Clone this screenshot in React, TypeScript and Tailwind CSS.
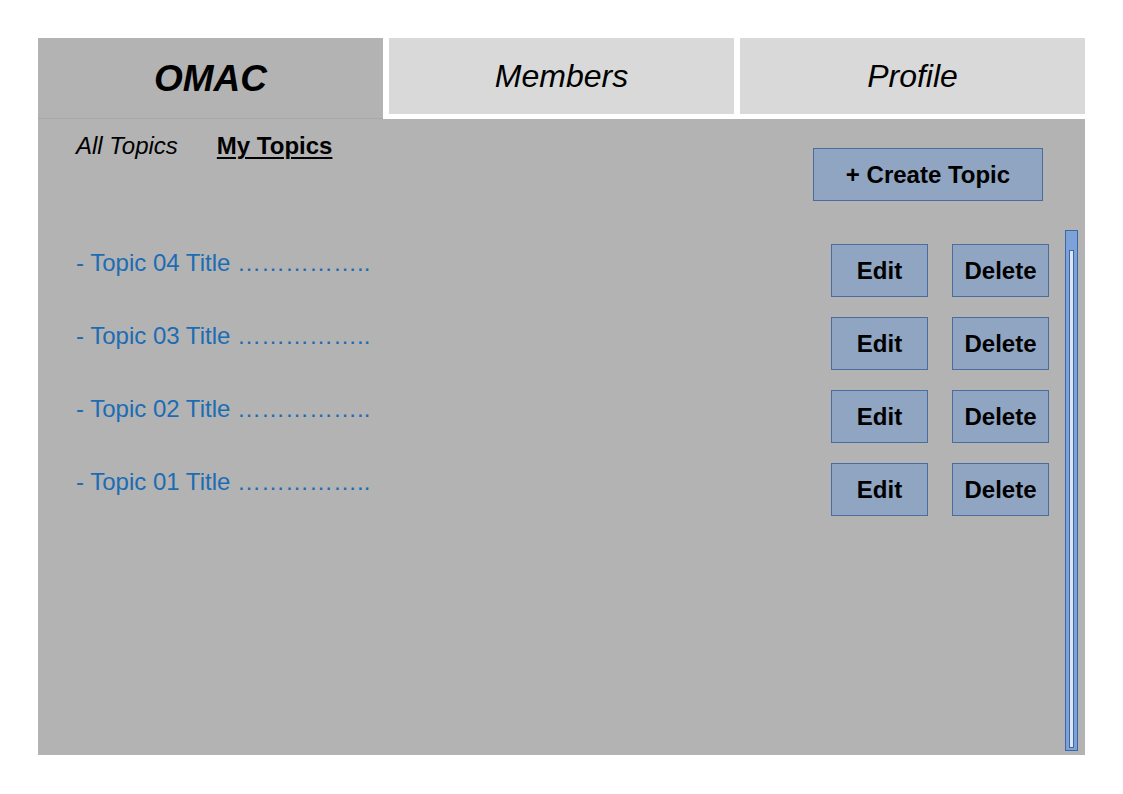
import React from "react";

const topics = ["04", "03", "02", "01"];

export default function App() {
  return (
    <div className="w-[1123px] h-[794px] bg-white pl-[38px] pt-[38px] font-['Liberation_Sans',Arial,sans-serif]">
      <div className="w-[1047px]">
        {/* Header tabs */}
        <div className="flex h-[81px] items-start">
          <div className="w-[345px] h-[81px] bg-[#b3b3b3] border-b border-[#a8a8a8] flex items-center justify-center">
            <span className="text-[37px] font-bold italic text-black leading-none mt-[1px]">OMAC</span>
          </div>
          <div className="ml-[6px] w-[345px] h-[76px] bg-[#d9d9d9] flex items-center justify-center">
            <span className="text-[32px] italic text-black leading-none">Members</span>
          </div>
          <div className="ml-[6px] w-[345px] h-[76px] bg-[#d9d9d9] flex items-center justify-center">
            <span className="text-[32px] italic text-black leading-none">Profile</span>
          </div>
        </div>

        {/* Main panel */}
        <div className="relative h-[636px] bg-[#b3b3b3]">
          <div className="flex justify-between items-start pl-[38px] pr-[42px] pt-[13px]">
            <div className="flex items-center gap-[39px] text-[24px] leading-[28px] text-black">
              <span className="italic">All Topics</span>
              <span className="font-bold underline underline-offset-[3px] decoration-[2px]">My Topics</span>
            </div>
            <button className="mt-[16px] w-[230px] h-[53px] bg-[#8fa5c1] border border-[#4a6c9e] text-[24px] font-bold text-black flex items-center justify-center">
              + Create Topic
            </button>
          </div>

          <div className="mt-[43px] flex flex-col gap-[20px]">
            {topics.map((t) => (
              <div key={t} className="flex justify-between items-start pl-[38px] pr-[36px]">
                <span className="pt-[5px] text-[24px] leading-[28px] text-[#1c6cb3]">
                  - Topic {t} Title ……………..
                </span>
                <div className="flex gap-[24px]">
                  <button className="w-[97px] h-[53px] bg-[#8fa5c1] border border-[#4a6c9e] text-[24px] font-bold text-black flex items-center justify-center">
                    Edit
                  </button>
                  <button className="w-[97px] h-[53px] bg-[#8fa5c1] border border-[#4a6c9e] text-[24px] font-bold text-black flex items-center justify-center">
                    Delete
                  </button>
                </div>
              </div>
            ))}
          </div>

          {/* Scrollbar */}
          <div className="absolute right-[7px] top-[111px] bottom-[4px] w-[13px] bg-[#7ca2d8] border border-[#3d66a6]">
            <div className="absolute left-[3px] right-[3px] top-[19px] bottom-[2px] bg-[#dfe5ef] border border-[#3d66a6]" />
          </div>
        </div>
      </div>
    </div>
  );
}
